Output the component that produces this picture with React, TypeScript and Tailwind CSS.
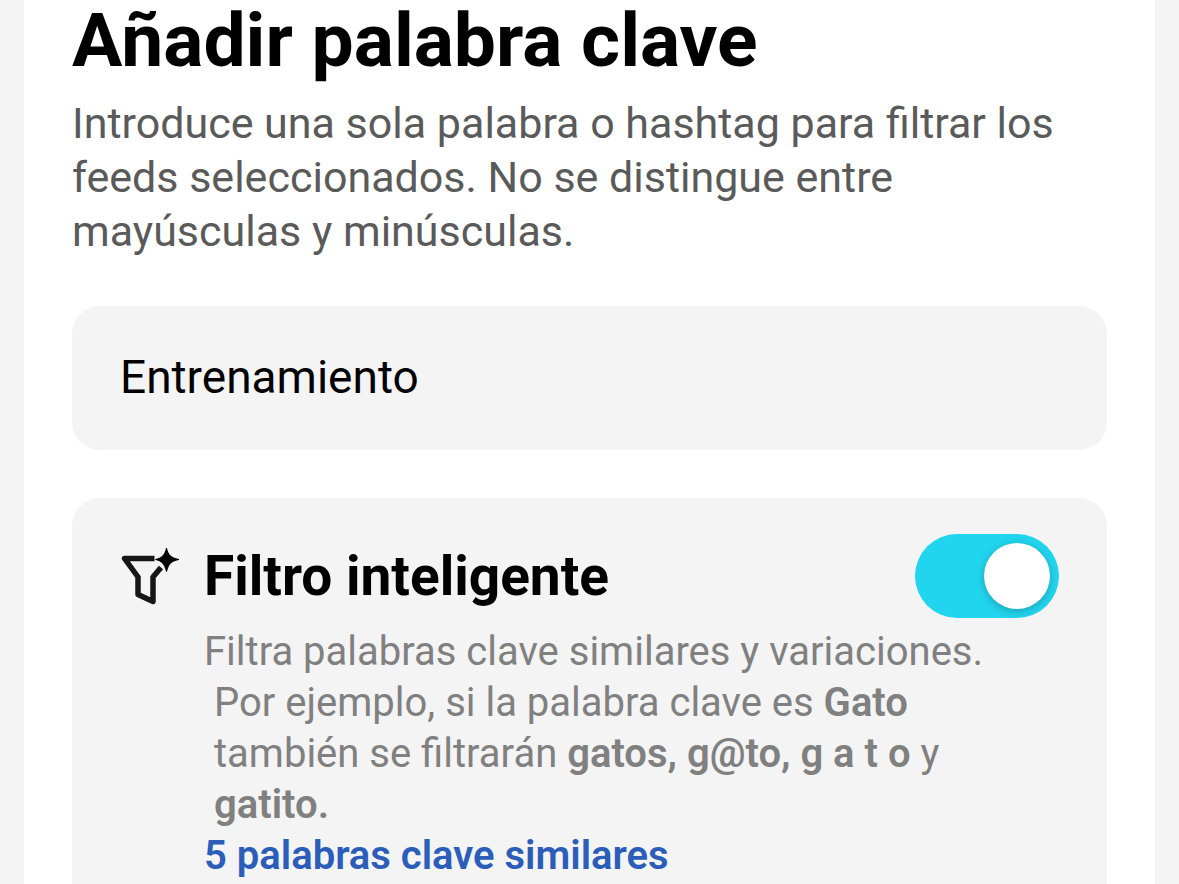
import { useState } from "react";

function SmartFilterIcon() {
  return (
    <svg viewBox="0 0 60 60" className="size-[60px] shrink-0" fill="none" aria-hidden="true">
      <path
        d="M34.5 12.5H4.5L18 31V48.5L33 55.5V31L41 21.5"
        stroke="#161616"
        strokeWidth="5.5"
        strokeLinejoin="round"
      />
      <path
        d="M46.5 2C48 9 51 12 59 13.5C51 15 48.5 18 46.5 25.5C44.5 18 42 15 35.5 13.5C42 12 45 9 46.5 2Z"
        fill="#000"
        stroke="#000"
        strokeWidth="1"
        strokeLinejoin="round"
      />
    </svg>
  );
}

export default function App() {
  const [keyword, setKeyword] = useState("Entrenamiento");
  const [smartFilter, setSmartFilter] = useState(true);

  return (
    <main className="flex h-screen flex-col overflow-hidden bg-[#f4f4f4] px-6 font-['Roboto',sans-serif]">
      <div className="flex flex-1 flex-col bg-white px-12">
        <h1 className="text-[75px] leading-[80px] font-bold text-black">Añadir palabra clave</h1>
        <p className="mt-4 text-[43px] leading-[54px] text-[#5a5a5a]">
          Introduce una sola palabra o hashtag para filtrar los
          <br />
          feeds seleccionados. No se distingue entre
          <br />
          mayúsculas y minúsculas.
        </p>

        <input
          type="text"
          aria-label="Palabra clave"
          value={keyword}
          onChange={(e) => setKeyword(e.target.value)}
          className="mt-12 h-36 w-full shrink-0 rounded-[28px] bg-[#f4f4f4] px-12 pb-0.5 text-[46px] text-black outline-none"
        />

        <section className="mt-12 flex-1 rounded-t-[28px] bg-[#f4f4f4] px-12 pt-9">
          <div className="flex items-center gap-6">
            <SmartFilterIcon />
            <label htmlFor="smart-filter" className="flex-1 text-[55px] leading-[84px] font-bold text-black">
              Filtro inteligente
            </label>
            <input
              id="smart-filter"
              type="checkbox"
              role="switch"
              checked={smartFilter}
              onChange={(e) => setSmartFilter(e.target.checked)}
              className="h-[84px] w-36 shrink-0 cursor-pointer appearance-none rounded-full bg-[#d0d0d0] p-[9px] transition-colors before:block before:size-[66px] before:rounded-full before:bg-white before:shadow-[0_2px_8px_rgba(0,0,0,0.25)] before:transition-transform checked:bg-[#22d5ee] checked:before:translate-x-[60px]"
            />
          </div>

          {/* Copy lines up with the label, past the icon column */}
          <div className="mt-2 pl-[84px] text-[40px] leading-[51px] text-[#808080]">
            <p>Filtra palabras clave similares y variaciones.</p>
            <p className="pl-2.5">
              Por ejemplo, si la palabra clave es <b className="font-semibold">Gato</b>
              <br />
              también se filtrarán <b className="font-semibold">gatos, g@to, g a t o</b> y
              <br />
              <b className="font-semibold">gatito.</b>
            </p>
            <a href="#similares" className="block font-semibold text-[#2b5db9]">
              5 palabras clave similares
            </a>
          </div>
        </section>
      </div>
    </main>
  );
}
